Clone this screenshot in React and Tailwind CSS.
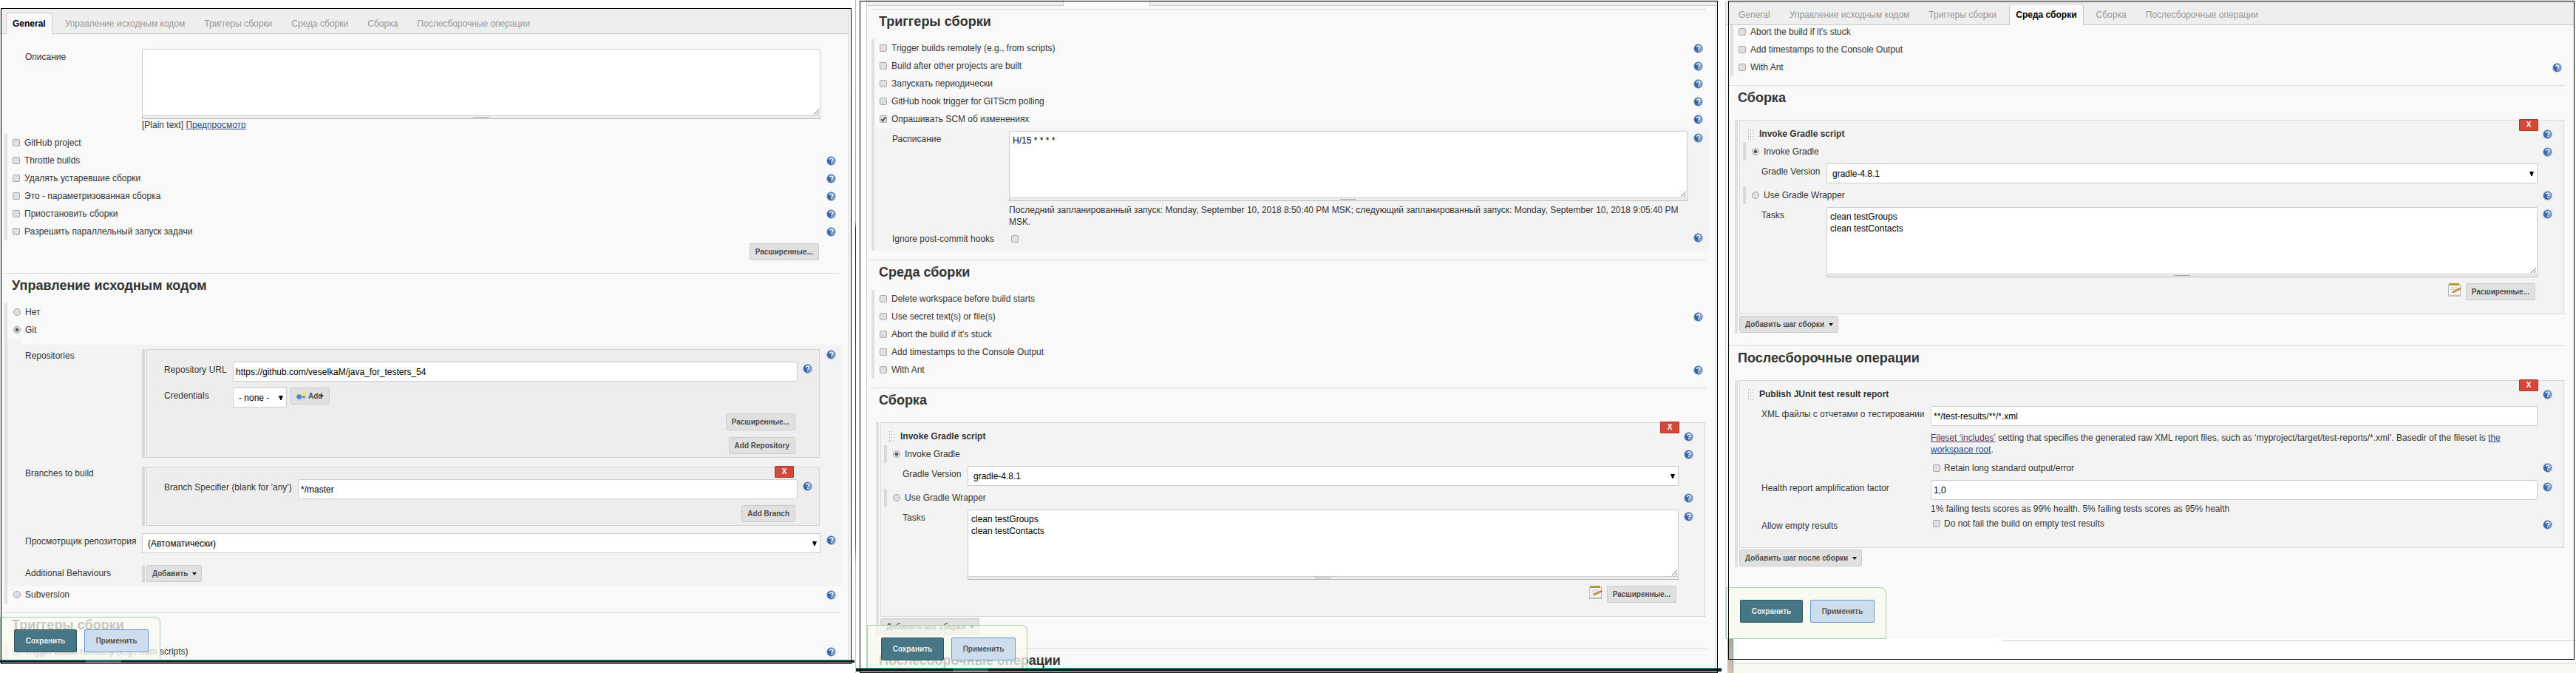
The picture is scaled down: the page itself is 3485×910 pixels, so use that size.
import { useId } from "react";

const TABS = [
  "General",
  "Управление исходным кодом",
  "Триггеры сборки",
  "Среда сборки",
  "Сборка",
  "Послесборочные операции",
];

function Help() {
  return (
    <button type="button" aria-label="Help" className="block size-[13px] shrink-0">
      <svg viewBox="0 0 13 13" className="block size-[13px]">
        <circle cx="6.5" cy="6.5" r="6.2" fill="#8fabd2" />
        <circle cx="6.5" cy="6.5" r="5.4" fill="#3b66a8" />
        <path d="M8 1.4A5.4 5.4 0 0 1 8 11.6Z" fill="#7f9fcd" />
        <path d="M4.6 5.1C4.6 3.7 5.5 3 6.6 3s2 .7 2 1.8c0 1.4-1.8 1.4-1.8 2.8" fill="none" stroke="#fff" strokeWidth="1.5" />
        <rect x="6" y="8.6" width="1.6" height="1.6" fill="#fff" />
      </svg>
    </button>
  );
}

function Check({ checked, id }) {
  return (
    <span className="grid size-[10px] shrink-0">
      <input
        id={id}
        type="checkbox"
        defaultChecked={checked}
        className="peer col-start-1 row-start-1 size-[10px] appearance-none rounded-[2px] border border-[#a8a8a8] bg-[#e0e0e0]"
      />
      <svg viewBox="0 0 10 10" className="pointer-events-none invisible col-start-1 row-start-1 size-[10px] peer-checked:visible">
        <path d="M2.4 5.2 4.2 7.4 8 2.2" fill="none" stroke="#333" strokeWidth="1.6" />
      </svg>
    </span>
  );
}

function Radio({ name, checked }) {
  return (
    <span className="grid size-[10px] shrink-0">
      <input
        type="radio"
        name={name}
        defaultChecked={checked}
        className="peer col-start-1 row-start-1 size-[10px] appearance-none rounded-full border border-[#a0a0a0] bg-[#e0e0e0]"
      />
      <svg viewBox="0 0 10 10" className="pointer-events-none invisible col-start-1 row-start-1 size-[10px] peer-checked:visible">
        <circle cx="5" cy="5" r="2.3" fill="#555" />
      </svg>
    </span>
  );
}

function CheckRow({ text, checked, help }) {
  return (
    <div className="flex h-6 items-center justify-between pr-[17px] pl-[7px]">
      <label className="flex items-center gap-1.5">
        <Check checked={checked} />
        {text}
      </label>
      {help && <Help />}
    </div>
  );
}

function RadioRow({ text, name, checked, help }) {
  return (
    <div className="flex h-6 items-center justify-between pr-[17px] pl-2">
      <label className="flex items-center gap-1.5">
        <Radio name={name} checked={checked} />
        {text}
      </label>
      {help && <Help />}
    </div>
  );
}

function Group({ children }) {
  return <div className="ml-1.5 border-l-4 border-[#e0e0e0]">{children}</div>;
}

function Select({ id, value, label }) {
  return (
    <span className="grid">
      <select
        id={id}
        aria-label={label}
        className="col-start-1 row-start-1 h-[27px] w-full appearance-none border border-[#ccc] bg-white pr-4 pl-[7px] text-xs text-black"
      >
        <option>{value}</option>
      </select>
      <svg viewBox="0 0 6 6" className="pointer-events-none col-start-1 row-start-1 mr-[5px] size-1.5 self-center justify-self-end">
        <path d="M0 0h6L3.6 6H2.4Z" fill="#000" />
      </svg>
    </span>
  );
}

function Input({ id, value }) {
  return (
    <input
      id={id}
      type="text"
      defaultValue={value}
      className="block h-[27px] w-full rounded-[2px] border border-[#ccc] bg-white px-[3px] text-xs text-black"
    />
  );
}

function Area({ id, value }) {
  return (
    <div>
      <textarea
        id={id}
        defaultValue={value}
        className="block h-[91px] w-full rounded-[2px] border border-[#ccc] bg-white px-1 py-1 text-xs leading-4 text-black"
      />
      <div className="flex h-1 justify-center border-x border-b border-[#b9bbb4] bg-[#eee] pt-px">
        <div className="h-px w-[22px] bg-[#aaa]" />
      </div>
    </div>
  );
}

const BTN = "flex h-[23px] items-center rounded-[2px] border border-[#ccc] bg-[#e0e0e0] px-[7px] text-[10px] font-bold text-[#4d4d4d]";

function Button({ children, menu }) {
  return (
    <button type="button" className={BTN}>
      {children}
      {menu && (
        <svg viewBox="0 0 6 4" className="-mr-px ml-1.5 h-1 w-1.5">
          <path d="M0 0h6L3 4Z" fill="#111" />
        </svg>
      )}
    </button>
  );
}

function DeleteButton() {
  return (
    <button
      type="button"
      className="absolute -top-0.5 right-[34px] flex h-4 w-[26px] items-center justify-center rounded-[1px] border border-[#b8352a] bg-[#d24939] text-[10px] font-bold text-white"
    >
      X
    </button>
  );
}

/* Label, control and help icon of a top-level form entry. */
function Field({ text, help, top, children }) {
  const id = useId();
  return (
    <div className="grid grid-cols-[158px_1fr_21px]">
      <label htmlFor={id} className={top ? "pt-px" : "pt-[3px]"}>{text}</label>
      <div>{typeof children === "function" ? children(id) : children}</div>
      <div className={top ? "flex justify-end pt-px" : "flex justify-end pt-[3px]"}>
        <div>{help && <Help />}</div>
      </div>
    </div>
  );
}

/* Same entry inside a bordered box, with a label column chosen by the box. */
function BoxField({ cols, text, help, children }) {
  const id = useId();
  return (
    <div className={`grid ${cols}`}>
      <label htmlFor={id} className="pt-[3px]">{text}</label>
      <div>{children(id)}</div>
      <div className="flex justify-end pt-[3px]"><div>{help && <Help />}</div></div>
    </div>
  );
}

function Rule({ className = "" }) {
  return <div className={`mr-[13px] ml-1 h-px bg-[#dcdcdc] ${className}`} />;
}

function Heading({ children }) {
  return <h2 className="h-10 pt-1.5 pl-4 text-lg leading-5 font-bold">{children}</h2>;
}

function TabBar({ active, className }) {
  return (
    <nav className={`flex gap-2 border-b border-[#ccc] bg-[#eee] pl-2 ${className}`}>
      {TABS.map((tab, i) => (
        <a
          key={tab}
          href="#"
          className={
            i === active
              ? "-mb-px flex h-[29px] items-center rounded-t border border-b-0 border-[#ccc] bg-[#f9f9f9] px-2 font-bold text-black"
              : "-mb-px flex h-[29px] items-center border border-transparent px-2 text-[#999]"
          }
        >
          {tab}
        </a>
      ))}
    </nav>
  );
}

function SaveBar({ closed }) {
  return (
    <div
      className={
        closed
          ? "absolute bottom-0 left-0 flex h-[70px] gap-2.5 rounded-tr-lg border border-[#a9cdb8] bg-[#f8f9ef] pt-4 pr-[15px] pl-[18px]"
          : "absolute bottom-0 left-0 flex h-[58px] gap-2.5 rounded-tr-lg border border-b-0 border-[#a9cdb8] bg-[#f8f9ef]/75 pt-4 pr-[15px] pl-[18px]"
      }
    >
      <button type="button" className="h-[31px] w-[85px] rounded-[2px] border border-[#2f5564] bg-[#467787] text-[10px] font-bold text-[#eee]">
        Сохранить
      </button>
      <button type="button" className="h-[31px] w-[87px] rounded-[2px] border border-[#6596d0] bg-[#cddded] text-[10px] font-bold text-[#555]">
        Применить
      </button>
    </div>
  );
}

function StepTitle({ children }) {
  return (
    <div className="flex h-6 items-center justify-between pr-[15px] pl-2.5">
      <div className="flex items-center gap-[7px]">
        <svg viewBox="0 0 9 16" className="h-4 w-[9px]">
          <rect width="9" height="16" fill="#fafafa" />
          {[1, 4, 7].flatMap((x) =>
            [1, 3, 5, 7, 9, 11, 13, 15].map((y) => (
              <rect key={`${x}-${y}`} x={x} y={y} width="1" height="1" fill="#aaa" />
            ))
          )}
        </svg>
        <h3 className="font-bold">{children}</h3>
      </div>
      <Help />
    </div>
  );
}

function StepRadio({ text, name, checked }) {
  return (
    <div className="ml-1 flex h-6 items-center justify-between border-l-4 border-[#dadada] pr-[15px] pl-2">
      <label className="flex items-center gap-1.5">
        <Radio name={name} checked={checked} />
        {text}
      </label>
      <Help />
    </div>
  );
}

function Notepad() {
  return (
    <svg viewBox="0 0 18 18" className="size-[18px]">
      <rect x=".5" y="2" width="16" height="15.5" fill="#f6f6f6" stroke="#bbb" />
      <rect x="1" y="15.5" width="15" height="2" fill="#c4c4c4" />
      <rect x="1" y="0" width="14" height="3" fill="#b09a3c" />
      <path d="M3 6h10M3 8.5h8M3 11h5" stroke="#c9c9c9" />
      <path d="M5.5 13 7 10.8 14.5 7l1 1.8-7.6 4Z" fill="#d8a444" stroke="#8d6a2a" strokeWidth=".6" />
      <path d="m14.4 7 2.2-1 1 1.8-2.2 1Z" fill="#d9534f" />
    </svg>
  );
}

function GradleStep({ name }) {
  const cols = "grid-cols-[88px_1fr_20px] pl-[29px] pr-[15px]";
  return (
    <div className="mr-3.5 ml-3 border-l-4 border-[#e0e0e0] pb-px pl-0.5">
      <section className="relative border border-[#d9d9d9] bg-[#f3f3f3] pt-1.5 pb-[18px]">
        <DeleteButton />
        <StepTitle>Invoke Gradle script</StepTitle>
        <StepRadio text="Invoke Gradle" name={name} checked />
        <div className="py-1">
          <BoxField cols={cols} text="Gradle Version">{(id) => <Select id={id} value="gradle-4.8.1" />}</BoxField>
        </div>
        <StepRadio text="Use Gradle Wrapper" name={name} />
        <div className="pt-1">
          <BoxField cols={cols} text="Tasks" help>
            {(id) => <Area id={id} value={"clean testGroups\nclean testContacts"} />}
          </BoxField>
        </div>
        <div className="flex justify-end gap-1.5 pt-2 pr-[38px]">
          <Notepad />
          <Button>Расширенные...</Button>
        </div>
      </section>
      <div className="flex pt-0.5">
        <Button menu>Добавить шаг сборки</Button>
      </div>
    </div>
  );
}

function DesktopEdge({ className, item }) {
  return (
    <div className={`border-t border-[#1fb5c4] bg-[#171c18] ${className}`}>
      <div className={`h-full w-12 bg-[#4c4c4c] ${item}`} />
    </div>
  );
}

function GeneralPage() {
  return (
    <div className="relative self-start pt-3 pb-0.5">
      <main className="relative border-r border-[#ccc] bg-[#f9f9f9]">
        <TabBar active={0} className="pt-[5px]" />
        <div className="pt-5 pr-[17px] pb-1 pl-[34px]">
          <Field text="Описание">
            {(id) => (
              <>
                <Area id={id} />
                <p>
                  [Plain text] <a href="#" className="text-[#204a87] underline">Предпросмотр</a>
                </p>
              </>
            )}
          </Field>
        </div>
        <Group>
          <CheckRow text="GitHub project" />
          <CheckRow text="Throttle builds" help />
          <CheckRow text="Удалять устаревшие сборки" help />
          <CheckRow text="Это - параметризованная сборка" help />
          <CheckRow text="Приостановить сборки" help />
          <CheckRow text="Разрешить параллельный запуск задачи" help />
        </Group>
        <div className="flex justify-end pt-1 pr-10">
          <Button>Расширенные...</Button>
        </div>
        <Rule className="mt-[17px]" />
        <Heading>Управление исходным кодом</Heading>
        <Group>
          <RadioRow text="Нет" name="scm" />
          <RadioRow text="Git" name="scm" checked />
          <div className="mr-[9px] bg-[#f3f3f3] pb-1">
            <div className="ml-[19px] h-2 bg-[#f9f9f9]" />
            <div className="pt-1.5 pr-2 pl-6">
              <Field text="Repositories" help top>
                <div className="mr-px border-l-4 border-[#d9d9d9] pl-0.5">
                  <section className="border border-[#d3d3d3] bg-[#ededed] pt-4 pb-1">
                    <BoxField cols="grid-cols-[93px_1fr_20px] pl-[23px] pr-[9px]" text="Repository URL" help>
                      {(id) => <Input id={id} value="https://github.com/veselkaM/java_for_testers_54" />}
                    </BoxField>
                    <div className="pt-2">
                      <BoxField cols="grid-cols-[93px_1fr_20px] pl-[23px] pr-[9px]" text="Credentials">
                        {(id) => (
                          <div className="flex items-start gap-[5px]">
                            <div className="w-[73px]"><Select id={id} value="- none -" /></div>
                            <button type="button" className={BTN}>
                              <svg viewBox="0 0 13 13" className="mr-[3px] size-[13px]">
                                <ellipse cx="7" cy="12" rx="5" ry=".8" fill="#cfcfcf" />
                                <circle cx="3.6" cy="7.5" r="3.3" fill="#4a86c8" />
                                <path d="M5 6.5h7.5v2H11v1.6H9.6V8.500H5Z" fill="#5d8fc9" />
                                <circle cx="10" cy="3.400" r="2.400" fill="#f3e750" />
                              </svg>
                              Add
                              <svg viewBox="0 0 6 4" className="-ml-1 h-1 w-1.5">
                                <path d="M0 0h6L3 4Z" fill="#444" />
                              </svg>
                            </button>
                          </div>
                        )}
                      </BoxField>
                    </div>
                    <div className="flex flex-col items-end gap-[9px] pt-2 pr-8">
                      <Button>Расширенные...</Button>
                      <Button>Add Repository</Button>
                    </div>
                  </section>
                </div>
              </Field>
              <div className="pt-3">
                <Field text="Branches to build" top>
                  <div className="mr-px border-l-4 border-[#d9d9d9] pl-0.5">
                    <section className="relative border border-[#d3d3d3] bg-[#ededed] pt-4 pb-1">
                      <DeleteButton />
                      <BoxField cols="grid-cols-[181px_1fr_20px] pl-[23px] pr-[9px]" text="Branch Specifier (blank for 'any')" help>
                        {(id) => <Input id={id} value="*/master" />}
                      </BoxField>
                      <div className="flex justify-end pt-2 pr-8">
                        <Button>Add Branch</Button>
                      </div>
                    </section>
                  </div>
                </Field>
              </div>
              <div className="pt-2.5">
                <Field text="Просмотрщик репозитория" help>
                  {(id) => <Select id={id} value="(Автоматически)" />}
                </Field>
              </div>
              <div className="pt-4">
                <Field text="Additional Behaviours">
                  <div className="flex border-l-4 border-[#d9d9d9] pb-px pl-0.5">
                    <Button menu>Добавить</Button>
                  </div>
                </Field>
              </div>
            </div>
          </div>
          <RadioRow text="Subversion" name="scm" help />
        </Group>
        <Rule className="mt-3" />
        <Heading>Триггеры сборки</Heading>
        <div className="h-[23px] overflow-hidden">
          <Group>
            <CheckRow text="Trigger builds remotely (e.g., from scripts)" help />
          </Group>
        </div>
        <SaveBar />
      </main>
      <DesktopEdge className="-mr-[7px] h-1" item="ml-[116px]" />
      <div className="pointer-events-none absolute top-[11px] -right-[3px] bottom-0 left-px border border-black" />
    </div>
  );
}

function TriggersPage() {
  return (
    <div className="relative self-start pb-0.5">
      <main className="relative border-x border-[#ccc] bg-[#f9f9f9]">
        <div className="flex h-2">
          <div className="w-[266px] border-r border-b border-[#ccc] bg-[#eee]" />
          <div className="w-[116px]" />
          <div className="flex-1 border-b border-l border-[#ccc] bg-[#eee]" />
        </div>
        <Rule className="mt-1" />
        <Heading>Триггеры сборки</Heading>
        <Group>
          <CheckRow text="Trigger builds remotely (e.g., from scripts)" help />
          <CheckRow text="Build after other projects are built" help />
          <CheckRow text="Запускать периодически" help />
          <CheckRow text="GitHub hook trigger for GITScm polling" help />
          <CheckRow text="Опрашивать SCM об изменениях" checked help />
          <div className="mr-[9px] bg-[#f3f3f3] pt-1 pr-2 pl-6">
            <Field text="Расписание" help>
              {(id) => (
                <>
                  <Area id={id} value="H/15 * * * *" />
                  <p className="pt-1">
                    Последний запланированный запуск: Monday, September 10, 2018 8:50:40 PM MSK; следующий
                    запланированный запуск: Monday, September 10, 2018 9:05:40 PM MSK.
                  </p>
                </>
              )}
            </Field>
            <div className="pt-1 pb-2">
              <Field text="Ignore post-commit hooks" help>
                {(id) => <div className="pt-1.5 pl-[3px]"><Check id={id} /></div>}
              </Field>
            </div>
          </div>
        </Group>
        <Rule className="mt-3" />
        <Heading>Среда сборки</Heading>
        <Group>
          <CheckRow text="Delete workspace before build starts" />
          <CheckRow text="Use secret text(s) or file(s)" help />
          <CheckRow text="Abort the build if it's stuck" />
          <CheckRow text="Add timestamps to the Console Output" />
          <CheckRow text="With Ant" help />
        </Group>
        <Rule className="mt-3" />
        <Heading>Сборка</Heading>
        <div className="pt-1.5">
          <GradleStep name="gradle-a" />
        </div>
        <Rule className="mt-4" />
        <div className="h-[26px] overflow-hidden">
          <Heading>Послесборочные операции</Heading>
        </div>
        <SaveBar />
      </main>
      <DesktopEdge className="-mr-[7px] -ml-3.5 h-[5px]" item="ml-[131px]" />
      <div className="pointer-events-none absolute top-px -right-0.5 bottom-0 -left-[9px] border border-black" />
    </div>
  );
}

function PostBuildPage() {
  const cols = "grid-cols-[229px_1fr_20px] pl-[29px] pr-[15px]";
  const retain = useId();
  return (
    <div className="relative flex flex-col">
      <div className="h-[3px] bg-[#f6f9f1]" />
      <main className="relative mr-0.5 border-t border-l border-[#d5d5d0] bg-[#f9f9f9]">
        <TabBar active={3} className="pt-px" />
        <div className="flex h-[69px] flex-col justify-end overflow-hidden">
          <Group>
            <CheckRow text="Abort the build if it's stuck" />
            <CheckRow text="Add timestamps to the Console Output" />
            <CheckRow text="With Ant" help />
          </Group>
        </div>
        <Rule className="mt-3" />
        <Heading>Сборка</Heading>
        <div className="pt-1.5">
          <GradleStep name="gradle-b" />
        </div>
        <Rule className="mt-4" />
        <Heading>Послесборочные операции</Heading>
        <div className="pt-1.5 pb-[97px]">
          <div className="mr-3.5 ml-3 border-l-4 border-[#e0e0e0] pb-px pl-0.5">
            <section className="relative border border-[#d9d9d9] bg-[#f3f3f3] pt-1.5 pb-[21px]">
              <DeleteButton />
              <StepTitle>Publish JUnit test result report</StepTitle>
              <div className="pt-1">
                <BoxField cols={cols} text="XML файлы с отчетами о тестировании">
                  {(id) => (
                    <>
                      <Input id={id} value="**/test-results/**/*.xml" />
                      <p className="pt-2">
                        <a href="#" className="text-[#5c3566] underline">Fileset ‘includes’</a> setting that specifies the
                        generated raw XML report files, such as ‘myproject/target/test-reports/*.xml’. Basedir of the
                        fileset is <a href="#" className="text-[#204a87] underline">the workspace root</a>.
                      </p>
                    </>
                  )}
                </BoxField>
              </div>
              <div className="flex h-[33px] items-center justify-between pr-[15px] pl-[261px]">
                <label htmlFor={retain} className="flex items-center gap-[5px]">
                  <Check id={retain} />
                  Retain long standard output/error
                </label>
                <Help />
              </div>
              <BoxField cols={cols} text="Health report amplification factor" help>
                {(id) => (
                  <>
                    <Input id={id} value="1,0" />
                    <p className="pt-1">1% failing tests scores as 99% health. 5% failing tests scores as 95% health</p>
                  </>
                )}
              </BoxField>
              <div className="pt-1">
                <BoxField cols={cols} text="Allow empty results" help>
                  {(id) => (
                    <div className="flex items-center gap-[5px] pl-[3px]">
                      <Check id={id} />
                      <span>Do not fail the build on empty test results</span>
                    </div>
                  )}
                </BoxField>
              </div>
            </section>
            <div className="flex pt-0.5">
              <Button menu>Добавить шаг после сборки</Button>
            </div>
          </div>
        </div>
        <SaveBar closed />
      </main>
      <div className="flex min-h-[46px] flex-1">
        <div className="ml-[3px] w-2 border-r border-[#1fb5c4] bg-gradient-to-b from-[#b8a090] to-[#e0c4b0]" />
        <div className="flex flex-1 flex-col">
          <div className="mt-0.5 ml-[365px] h-px bg-[#ccc]" />
          <div className="mt-[29px] flex-1 border-t border-[#d0d4cc] bg-[#f6f9f1]" />
        </div>
      </div>
      <div className="pointer-events-none absolute top-px right-0.5 bottom-[18px] left-1 border border-black" />
    </div>
  );
}

export default function App() {
  return (
    <div className="grid grid-cols-[1149fr_23px_1150fr_12px_1151fr] overflow-hidden bg-white font-['Liberation_Sans',Arial,sans-serif] text-xs leading-4 text-[#333]">
      <GeneralPage />
      <div className="pl-2">
        <div className="h-full w-px bg-[linear-gradient(#b4b4c4_0%,#a4a4b8_33%,#14201f_34%,#2c4a4c_60%,#4b6a6e_81%,#d8b8a0_84%,#e6c8b6_100%)]" />
      </div>
      <TriggersPage />
      <div />
      <PostBuildPage />
    </div>
  );
}
